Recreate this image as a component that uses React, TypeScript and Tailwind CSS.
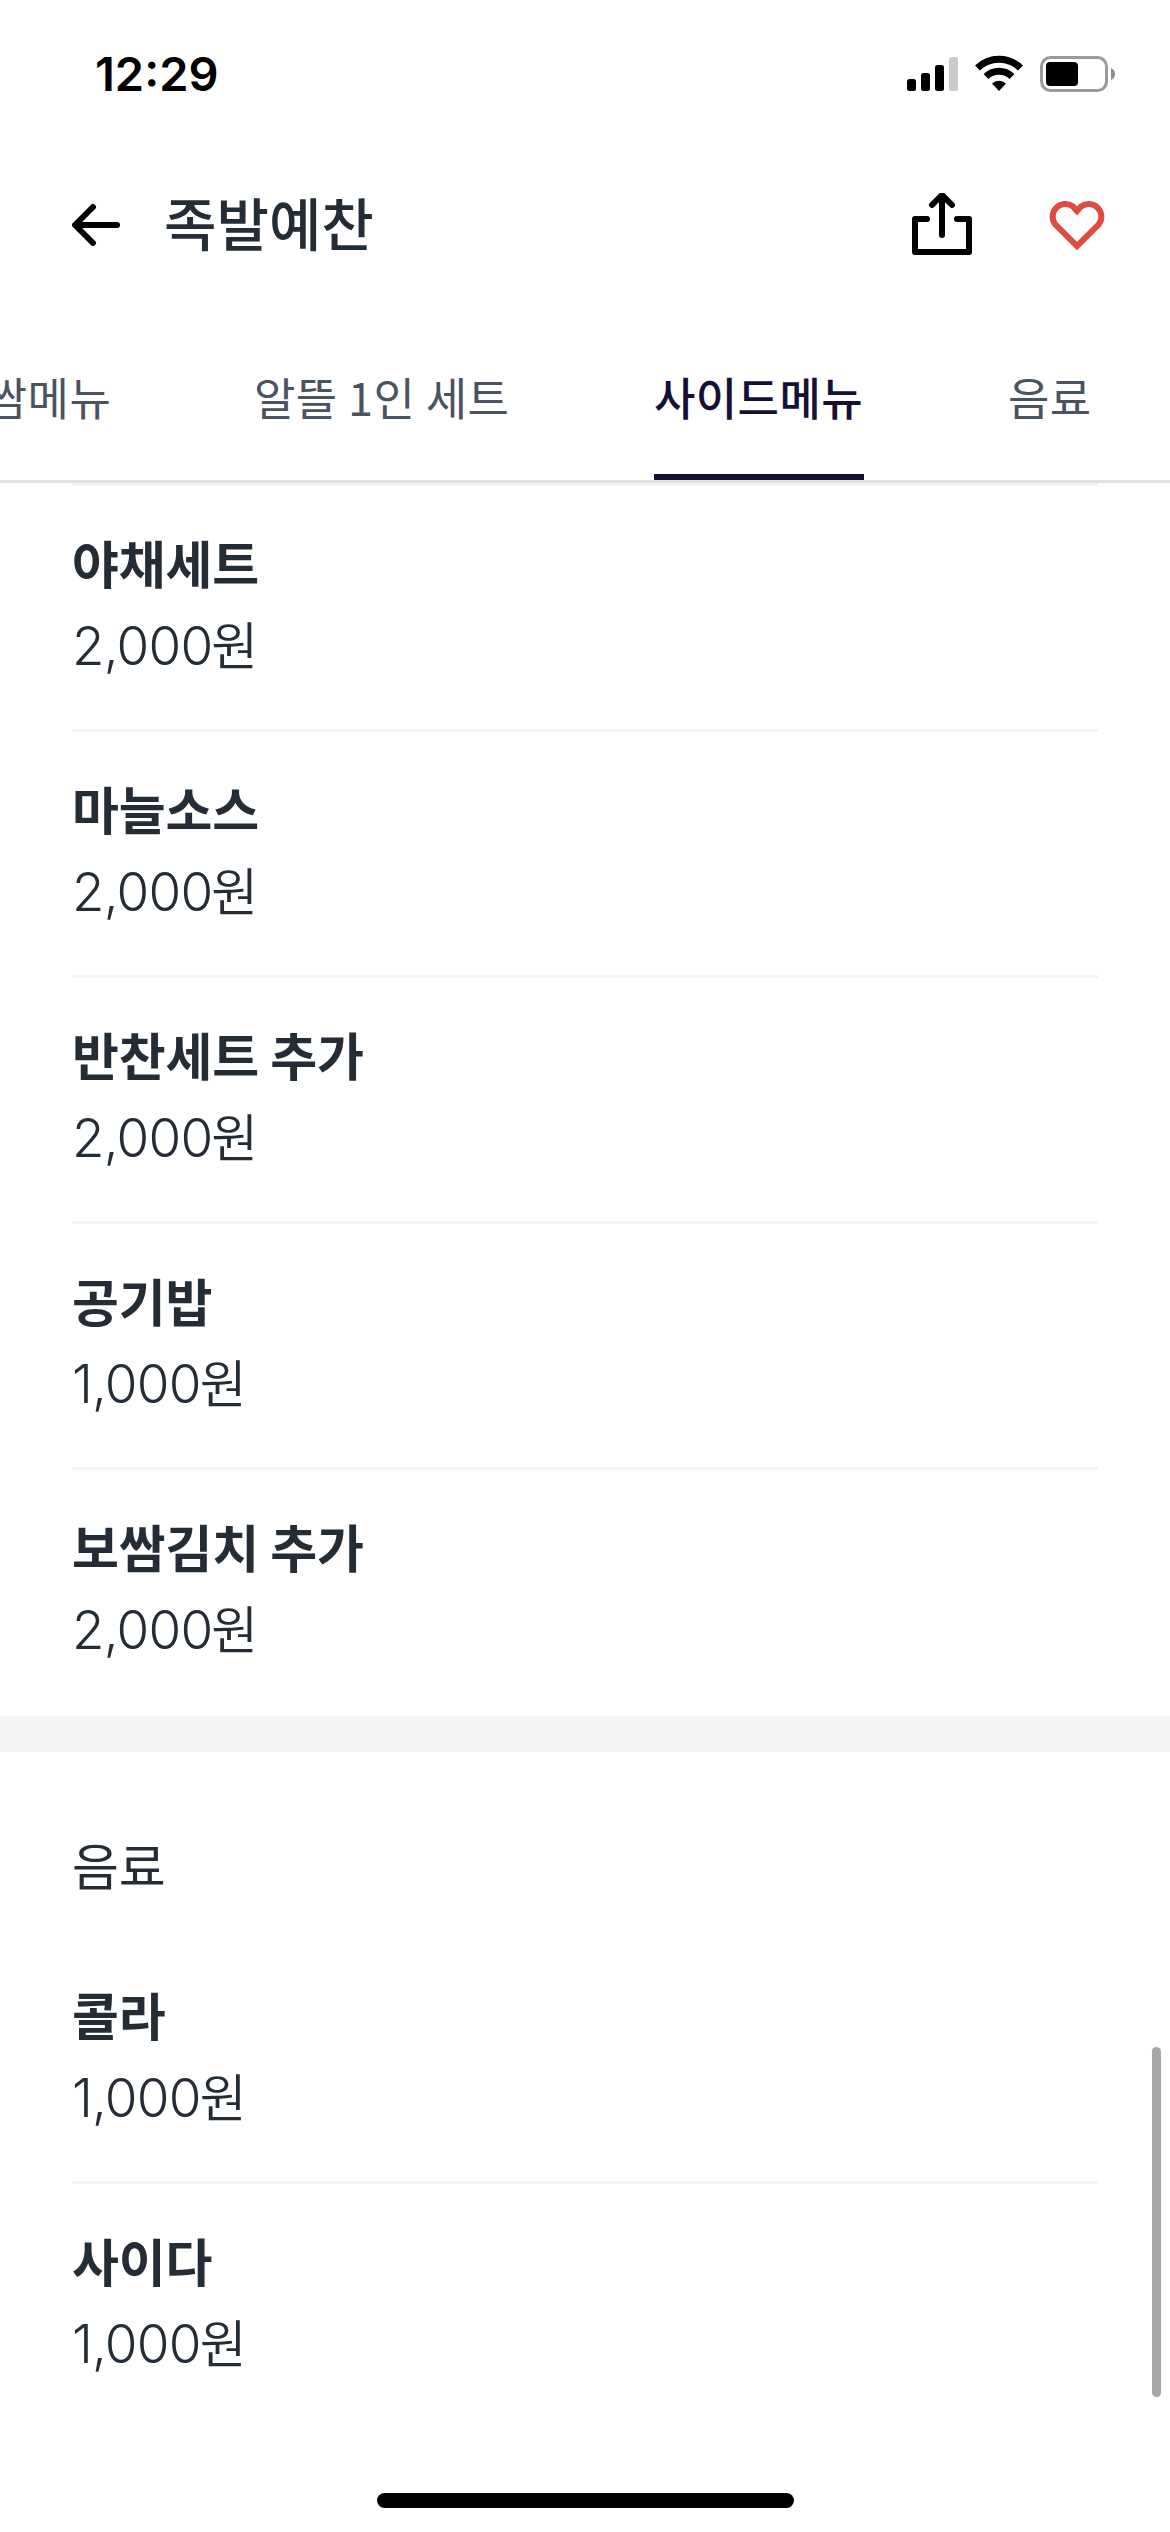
type MenuItem = {
  name: string;
  price: string;
};

const sideMenus: MenuItem[] = [
  { name: '야채세트', price: '2,000' },
  { name: '마늘소스', price: '2,000' },
  { name: '반찬세트 추가', price: '2,000' },
  { name: '공기밥', price: '1,000' },
  { name: '보쌈김치 추가', price: '2,000' },
];

const drinks: MenuItem[] = [
  { name: '콜라', price: '1,000' },
  { name: '사이다', price: '1,000' },
];

function StatusBar() {
  return (
    <div className="flex h-[147px] items-start justify-between pl-[95px] pr-[54px] pt-[46px]">
      <span className="font-['Inter',sans-serif] text-[47px] font-semibold leading-[56px] text-black">12:29</span>
      <svg className="mt-[8px]" width="210" height="40" viewBox="906 54 210 40">
        {/* Signal */}
        <rect x="907" y="79" width="9" height="12" rx="2.5" />
        <rect x="921" y="73" width="9" height="18" rx="2.5" />
        <rect x="935" y="65" width="9" height="26" rx="2.5" />
        <rect x="949" y="57" width="9" height="34" rx="2.5" fill="#cccccc" />
        {/* Wifi */}
        <path d="M977.5 68 A31 31 0 0 1 1020.5 68" fill="none" stroke="#000" strokeWidth="7" />
        <path d="M986 76.5 A19 19 0 0 1 1012 76.5" fill="none" stroke="#000" strokeWidth="7" />
        <path d="M992 83.5 A10.5 10.5 0 0 1 1006 83.5 L999 91 Z" />
        {/* Battery */}
        <rect x="1041.5" y="57.5" width="65" height="33" rx="9" fill="none" stroke="#9a9a9a" strokeWidth="3" />
        <rect x="1046" y="62" width="32" height="24" rx="4" />
        <path d="M1111 68 Q1115 70 1115 74 Q1115 78 1111 80 Z" fill="#8c8c8c" />
      </svg>
    </div>
  );
}

function Header() {
  return (
    <header className="flex h-[156px] items-center justify-between pl-[72px] pr-[64px]">
      <div className="flex items-center">
        <svg width="48" height="48" viewBox="0 0 48 48" fill="none" stroke="#000" strokeWidth="6" strokeLinecap="round" strokeLinejoin="round">
          <path d="M45 24 H3.5 M21 6 L3 24 L21 42" />
        </svg>
        <h1 className="mb-[8px] ml-[44px] text-[57px] font-medium leading-[80px] text-[#242d36]">족발예찬</h1>
      </div>
      <div className="flex items-center gap-[76px]">
        <svg width="60" height="64" viewBox="912 193 60 64" fill="none" stroke="#000" strokeWidth="6" strokeLinecap="round" strokeLinejoin="round">
          <path d="M927 219 H915 V252 H969 V219 H957" />
          <path d="M942 235 V195.5 M932 205 L942 195 L952 205" />
        </svg>
        <svg width="58" height="54" viewBox="1048 198 58 54" fill="none" stroke="#de4b43" strokeWidth="6">
          <path d="M1077 211 L1073 206.500 A12.700 12.700 0 0 0 1055 224 L1077 246 L1099 224 A12.700 12.700 0 0 0 1081 206.500 Z" />
        </svg>
      </div>
    </header>
  );
}

function Tabs() {
  return (
    <nav className="flex h-[180px] gap-[144px] overflow-hidden whitespace-nowrap border-b-[3px] border-[#dee2e6] text-[45px] leading-[66px] tracking-[0.4px] text-[#495460]">
      <span className="-ml-[56px] w-[166px] shrink-0 pt-[61px] text-right">보쌈메뉴</span>
      <span className="w-[256px] shrink-0 pt-[61px]">알뜰 1인 세트</span>
      <span className="w-[210px] shrink-0 border-b-[6px] border-[#160f36] pt-[61px] font-medium text-[#160f36]">사이드메뉴</span>
      <span className="w-[90px] shrink-0 pt-[61px]">음료</span>
    </nav>
  );
}

function MenuRow({ name, price }: MenuItem) {
  return (
    <li className="h-[246px] border-b-[3px] border-[#f4f4f5] pt-[39px] last:border-b-0">
      <p className="text-[51px] font-bold leading-[74px] tracking-[-0.2px]">{name}</p>
      <p className="mt-[7px] flex items-baseline leading-[74px]">
        <span className="font-['Inter',sans-serif] text-[53px] font-light tracking-[-0.8px]">{price}</span>
        <span className="-ml-px text-[51px] font-[350]">원</span>
      </p>
    </li>
  );
}

export default function App() {
  return (
    <div className="relative flex h-[2532px] w-[1170px] flex-col overflow-hidden bg-white font-['Noto_Sans_CJK_KR',sans-serif] text-[#242d36]">
      <StatusBar />
      <Header />
      <Tabs />

      <main>
        <ul className="mx-[72px] h-[1233px] border-t-[3px] border-[#f4f4f5]">
          {sideMenus.map((item) => (
            <MenuRow key={item.name} {...item} />
          ))}
        </ul>
        <div className="h-[36px] bg-[#f3f4f6]" />
        <section className="px-[72px]">
          <h2 className="h-[186px] pt-[75px] text-[51px] leading-[74px] tracking-[-0.2px]">음료</h2>
          <ul>
            {drinks.map((item) => (
              <MenuRow key={item.name} {...item} />
            ))}
          </ul>
        </section>
      </main>

      {/* Scroll indicator */}
      <div className="absolute right-[9px] top-[2047px] h-[350px] w-[9px] rounded-full bg-[#a5a5a5]" />
      {/* Home indicator */}
      <div className="absolute bottom-[24px] left-[377px] h-[15px] w-[417px] rounded-full bg-black" />
    </div>
  );
}
